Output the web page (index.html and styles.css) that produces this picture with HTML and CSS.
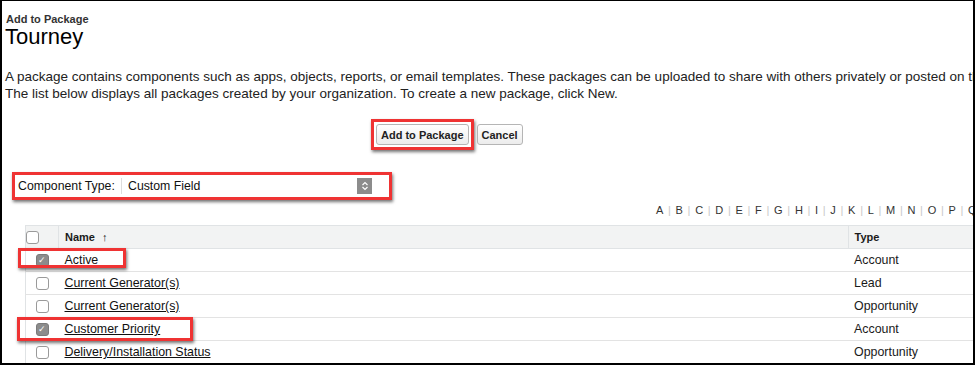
FILE: index.html
```html
<!DOCTYPE html>
<html lang="en">
<head>
<meta charset="UTF-8" />
<title>Add to Package - Tourney</title>
<link rel="stylesheet" href="styles.css">
</head>
<body>
<div class="frame">
  <div class="page-header">
    <div class="page-type">Add to Package</div>
    <h1 class="page-title">Tourney</h1>
  </div>
  <p class="intro">
    A package contains components such as apps, objects, reports, or email templates. These packages can be uploaded to share with others privately or posted on the AppExchange.<br>
    The list below displays all packages created by your organization. To create a new package, click New.
  </p>

  <div class="button-row">
    <span class="highlight-box">
      <button class="btn">Add to Package</button>
    </span>
    <button class="btn">Cancel</button>
  </div>

  <div class="filter-row">
    <label class="filter-label">Component Type:</label>
    <div class="select">
      <span class="select-value">Custom Field</span>
      <span class="select-stepper">
        <svg width="8" height="10" viewBox="0 0 8 10"><path d="M1.5 4 L4 1.5 L6.5 4 M1.5 6 L4 8.5 L6.5 6" fill="none" stroke="#fff" stroke-width="1.2"/></svg>
      </span>
    </div>
  </div>

  <div class="alpha-bar">
    <span>A</span><i>|</i><span>B</span><i>|</i><span>C</span><i>|</i><span>D</span><i>|</i><span>E</span><i>|</i><span>F</span><i>|</i><span>G</span><i>|</i><span>H</span><i>|</i><span>I</span><i>|</i><span>J</span><i>|</i><span>K</span><i>|</i><span>L</span><i>|</i><span>M</span><i>|</i><span>N</span><i>|</i><span>O</span><i>|</i><span>P</span><i>|</i><span>Q</span><i>|</i><span>R</span>
  </div>

  <div class="list-wrap">
    <table class="list">
      <thead>
        <tr>
          <th class="col-check"><span class="check"></span></th>
          <th class="col-name">Name <span class="sort">↑</span></th>
          <th class="col-type">Type</th>
        </tr>
      </thead>
      <tbody>
        <tr>
          <td class="col-check"><span class="check checked">✓</span></td>
          <td><a href="#">Active</a></td>
          <td>Account</td>
        </tr>
        <tr>
          <td class="col-check"><span class="check"></span></td>
          <td><a href="#">Current Generator(s)</a></td>
          <td>Lead</td>
        </tr>
        <tr>
          <td class="col-check"><span class="check"></span></td>
          <td><a href="#">Current Generator(s)</a></td>
          <td>Opportunity</td>
        </tr>
        <tr>
          <td class="col-check"><span class="check checked">✓</span></td>
          <td><a href="#">Customer Priority</a></td>
          <td>Account</td>
        </tr>
        <tr>
          <td class="col-check"><span class="check"></span></td>
          <td><a href="#">Delivery/Installation Status</a></td>
          <td>Opportunity</td>
        </tr>
      </tbody>
    </table>
    <div class="mark mark-active"></div>
    <div class="mark mark-priority"></div>
  </div>
</div>
</body>
</html>
```

FILE: styles.css
```css
/* Reset and base */
* {
  box-sizing: border-box;
}
body {
  margin: 0;
  font-family: "Liberation Sans", Arial, sans-serif;
  color: #1a1a1a;
  background: #fff;
}
.frame {
  width: 975px;
  height: 365px;
  border: 2px solid #000;
  border-top-width: 1px;
  overflow: hidden;
  position: relative;
  padding: 0 0 0 3px;
}
.page-header {
  padding-top: 12px;
}
.page-type {
  font-size: 11px;
  font-weight: 700;
  color: #333;
  line-height: 13px;
  padding-left: 1px;
}
.page-title {
  margin: 0;
  font-size: 22px;
  font-weight: 400;
  line-height: 22px;
  color: #000;
}
.intro {
  margin: 20px 0 0 0;
  font-size: 13.5px;
  line-height: 17px;
  white-space: nowrap;
  color: #222;
}
.button-row {
  display: flex;
  align-items: center;
  gap: 3px;
  margin: 17px 0 0 366px;
}
.highlight-box {
  display: inline-flex;
  border: 3px solid #ef3333;
  padding: 2px;
  box-shadow: 1px 2px 3px rgba(0,0,0,0.55);
}
.btn {
  margin: 0;
  font-family: inherit;
  font-size: 11px;
  font-weight: 700;
  color: #222;
  height: 21px;
  padding: 0 4px;
  border: 1px solid #b5b5b5;
  border-radius: 3px;
  background: linear-gradient(#ffffff, #ececec);
}
.filter-row {
  display: flex;
  align-items: center;
  width: 380px;
  height: 28px;
  margin: 22px 0 0 7px;
  border: 3px solid #ef3333;
  padding: 0 17px 0 3px;
  box-shadow: 1px 2px 3px rgba(0,0,0,0.55);
  font-size: 12.3px;
}
.filter-label {
  color: #111;
  width: 103px;
}
.select {
  flex: 1;
  display: flex;
  align-items: center;
  height: 16px;
  border-left: 1px solid #ddd;
  padding-left: 6px;
}
.select-value {
  flex: 1;
  color: #111;
}
.select-stepper {
  width: 15px;
  height: 16px;
  background: #8c8c8c;
  display: flex;
  align-items: center;
  justify-content: center;
}
.alpha-bar {
  margin: 3px 0 0 651px;
  font-size: 11px;
  line-height: 14px;
  white-space: nowrap;
  color: #333;
}
.alpha-bar i {
  font-style: normal;
  color: #c8c8c8;
  padding: 0 4.7px;
}
.list-wrap {
  position: relative;
  margin: 8px 0 0 20px;
}
.list {
  width: 1000px;
  border-collapse: collapse;
  font-size: 12.4px;
  border-left: 1px solid #e0e3e5;
}
.list th {
  background: #f2f3f3;
  font-size: 11px;
  font-weight: 700;
  text-align: left;
  height: 23px;
  padding: 0 6px;
  border-bottom: 1px solid #e0e3e5;
  border-top: 1px solid #e0e3e5;
}
.list th + th {
  border-left: 1px solid #e0e3e5;
}
.list td {
  height: 23px;
  padding: 0 6px;
  border-bottom: 1px solid #e3e3e3;
}
.col-check {
  width: 33px;
  text-align: center;
}
.list .col-check {
  padding: 0;
}
.col-type {
  width: 177px;
}
.sort {
  font-weight: 400;
  margin-left: 4px;
}
.list a {
  color: #111;
  text-decoration: underline;
}
.check {
  display: inline-block;
  width: 13px;
  height: 13px;
  border: 1px solid #9a9a9a;
  border-radius: 3px;
  background: #fff;
  vertical-align: middle;
  font-size: 9px;
  line-height: 11px;
  color: #fff;
  text-align: center;
}
.check.checked {
  background: #8c8c8c;
  border-color: #7a7a7a;
}
.mark {
  position: absolute;
  border: 3px solid #ef3333;
  box-shadow: 1px 2px 3px rgba(0,0,0,0.55);
}
.mark-active {
  left: -7px;
  top: 23px;
  width: 108px;
  height: 20px;
}
.mark-priority {
  left: -8px;
  top: 92px;
  width: 176px;
  height: 24px;
}
```
